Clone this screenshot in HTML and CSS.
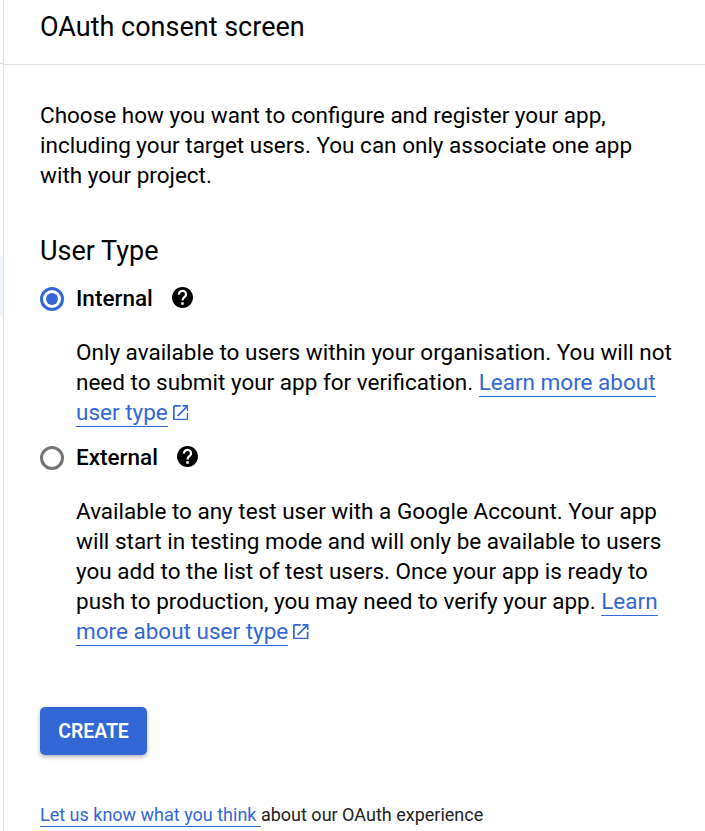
FILE: index.html
```html
<!DOCTYPE html>
<html lang="en">
<head>
<meta charset="utf-8">
<title>OAuth consent screen</title>
<link rel="stylesheet" href="styles.css">
</head>
<body>
<div class="page">
  <aside class="rail"><div class="rail-top"></div><div class="rail-active"></div></aside>
  <main class="panel">
    <header class="header"><h1>OAuth consent screen</h1></header>
    <div class="content">
      <p class="intro">Choose how you want to configure and register your app,<br>including your target users. You can only associate one app<br>with your project.</p>
      <h2>User Type</h2>
      <section class="option">
        <div class="option-row">
          <svg class="radio" viewBox="0 0 24 24"><circle cx="12" cy="12" r="10.5" fill="none" stroke="#3367d6" stroke-width="3"/><circle cx="12" cy="12" r="6" fill="#3367d6"/></svg>
          <span class="label internal">Internal</span>
          <svg class="help" viewBox="2 2 20 20"><path d="M12 2C6.48 2 2 6.48 2 12s4.48 10 10 10 10-4.48 10-10S17.52 2 12 2z"/><path d="M8.6 9.3A3.4 3.2 0 1 1 14.2 11.3C12.9 12.3 12 12.9 12 14.8" fill="none" stroke="#fff" stroke-width="2.1"/><path fill="#fff" d="M10.8 16.5h2.4v2.4h-2.4z"/></svg>
        </div>
        <p class="desc">Only available to users within your organisation. You will not<br>need to submit your app for verification. <a>Learn more about</a><br><a>user type</a><svg class="ext" viewBox="3 3 18 18"><path d="M19 19H5V5h7V3H5a2 2 0 0 0-2 2v14a2 2 0 0 0 2 2h14c1.1 0 2-.9 2-2v-7h-2v7zM14 3v2h3.59l-9.83 9.83 1.41 1.41L19 6.41V10h2V3h-7z"/></svg></p>
      </section>
      <section class="option">
        <div class="option-row">
          <svg class="radio" viewBox="0 0 24 24"><circle cx="12" cy="12" r="10.5" fill="none" stroke="#757575" stroke-width="3"/></svg>
          <span class="label external">External</span>
          <svg class="help" viewBox="2 2 20 20"><path d="M12 2C6.48 2 2 6.48 2 12s4.48 10 10 10 10-4.48 10-10S17.52 2 12 2z"/><path d="M8.6 9.3A3.4 3.2 0 1 1 14.2 11.3C12.9 12.3 12 12.9 12 14.8" fill="none" stroke="#fff" stroke-width="2.1"/><path fill="#fff" d="M10.8 16.5h2.4v2.4h-2.4z"/></svg>
        </div>
        <p class="desc">Available to any test user with a Google Account. Your app<br>will start in testing mode and will only be available to users<br>you add to the list of test users. Once your app is ready to<br>push to production, you may need to verify your app. <a>Learn</a><br><a>more about user type</a><svg class="ext" viewBox="3 3 18 18"><path d="M19 19H5V5h7V3H5a2 2 0 0 0-2 2v14a2 2 0 0 0 2 2h14c1.1 0 2-.9 2-2v-7h-2v7zM14 3v2h3.59l-9.83 9.83 1.41 1.41L19 6.41V10h2V3h-7z"/></svg></p>
      </section>
      <button class="create">CREATE</button>
      <p class="feedback"><a>Let us know what you think </a>about our OAuth experience</p>
    </div>
  </main>
</div>
</body>
</html>
```
FILE: styles.css
```css
* { box-sizing: border-box; margin: 0; padding: 0; }
body { font-family: Roboto, sans-serif; color: #000; background: #fff; overflow: hidden; }
.page { display: flex; height: 831px; overflow: hidden; }
.rail { width: 4px; flex: none; border-right: 1px solid #e0e0e0; }
.rail-top { height: 64px; border-bottom: 1px solid #e0e0e0; }
.rail-active { height: 60px; margin-top: 192px; background: #f0f5fe; }
.panel { flex: 1; }
.header { height: 65px; border-bottom: 1px solid #e0e0e0; padding: 9px 36px 0; }
h1, h2 { font-size: 27px; font-weight: 400; line-height: 36px; white-space: nowrap; }
.content { padding: 35px 0 0 36px; white-space: nowrap; }
.intro, .desc { font-size: 22.5px; line-height: 30px; }
h2 { margin-top: 43px; }
.option-row { display: flex; align-items: center; height: 59px; }
.radio { width: 24px; height: 24px; flex: none; }
.label { font-size: 22.5px; font-weight: 500; margin-left: 12px; padding-bottom: 2px; }
.internal { width: 96px; }
.external { width: 101px; }
.help { width: 21px; height: 21px; margin-bottom: 2px; }
.desc { padding-left: 36px; margin: 9px 0 1px; }
a { color: #3367d6; display: inline-block; height: 29px; line-height: 29px; border-bottom: 1px solid; white-space: pre; }
.ext { width: 15.5px; height: 15.5px; fill: #3367d6; margin-left: 5.2px; }
.create { display: block; margin-top: 61px; width: 107px; height: 48px; border: 0; border-radius: 5px; background: #3367d6; color: #fff; font: 600 19.5px Roboto, sans-serif; letter-spacing: -0.1px; box-shadow: 0 2px 4px rgba(0,0,0,.3); }
.feedback { margin-top: 48px; font-size: 18px; line-height: 24px; color: #212121; }
.feedback a { height: 24px; line-height: 24px; }
```
